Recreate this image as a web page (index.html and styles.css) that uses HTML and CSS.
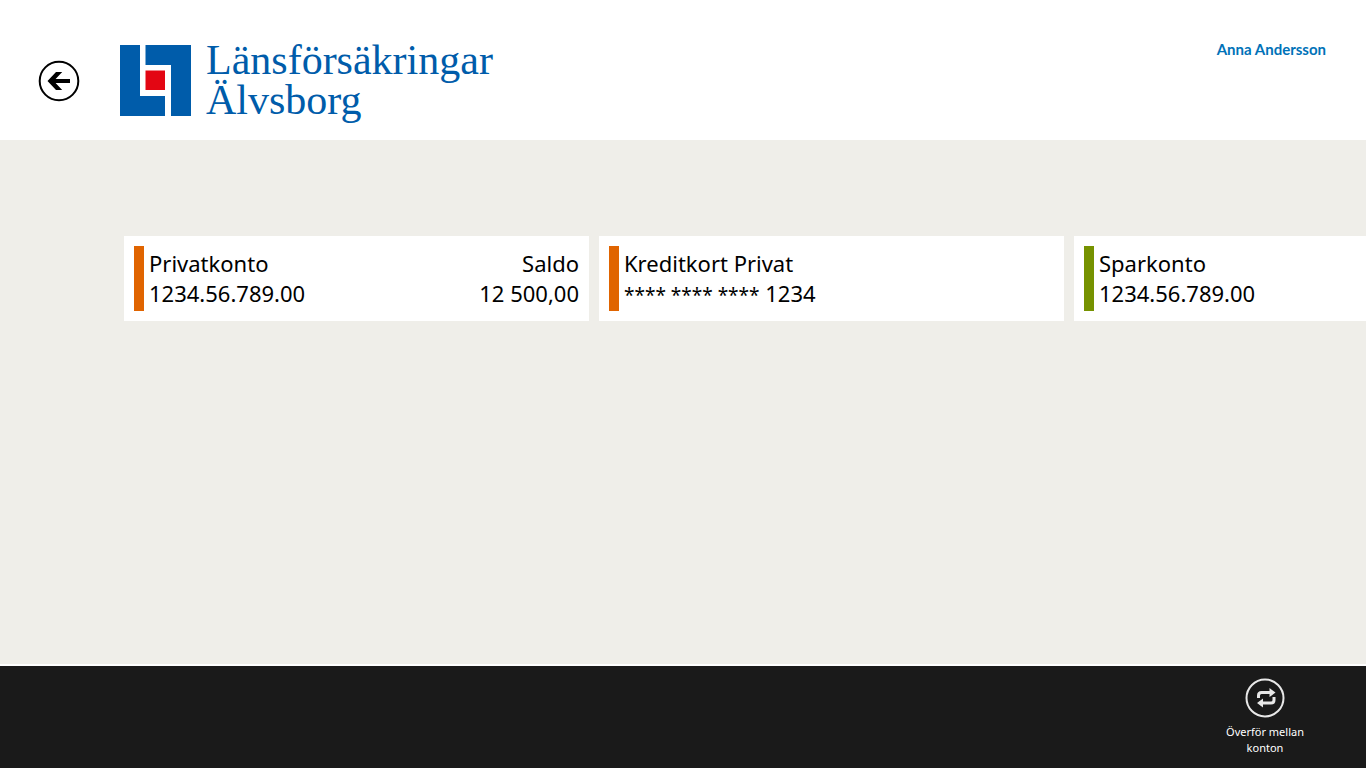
FILE: index.html
```
<!DOCTYPE html>
<html lang="sv">
  <head>
    <meta charset="UTF-8" />
    <meta name="viewport" content="width=device-width, initial-scale=1.0" />
    <title>Länsförsäkringar Älvsborg - Konton</title>
    <link rel="stylesheet" href="styles.css">
  </head>

  <body>
    <header>
      <button type="button" class="back" aria-label="Tillbaka">
        <svg viewBox="0 0 42 42" width="42" height="42">
          <circle cx="21" cy="21" r="19.3" fill="none" stroke="#000" stroke-width="2" />
          <path d="M9.5 21 18 12h6.2l-6.600 7H32v4H17.600l6.600 7H18z" />
        </svg>
      </button>

      <h1 class="brand">
        <svg class="symbol" viewBox="0 0 71 71" width="71" height="71" aria-hidden="true">
          <path fill="#005caa" d="M0 0h20v51h25v20H0z" />
          <path fill="#005caa" d="M25.500 0H71v71H51V20H25.500z" />
          <path fill="#e30613" d="M25.500 25.500H45V45H25.500z" />
        </svg>
        <span>Länsförsäkringar<br>Älvsborg</span>
      </h1>

      <a href="#" class="user">Anna Andersson</a>
    </header>

    <main>
      <ul class="accounts">
        <li class="account">
          <div class="info">
            <div>Privatkonto</div>
            <div>1234.56.789.00</div>
          </div>
          <div class="balance">
            <div>Saldo</div>
            <div>12 500,00</div>
          </div>
        </li>
        <li class="account">
          <div class="info">
            <div>Kreditkort Privat</div>
            <div><span class="masked">**** **** ****</span> 1234</div>
          </div>
        </li>
        <li class="account savings">
          <div class="info">
            <div>Sparkonto</div>
            <div>1234.56.789.00</div>
          </div>
        </li>
      </ul>
    </main>

    <footer>
      <button type="button" class="command">
        <svg viewBox="0 0 40 40" width="40" height="40" aria-hidden="true">
          <circle cx="20" cy="20" r="18.500" fill="none" stroke="#e8e8e8" stroke-width="2" />
          <g fill="none" stroke="#e8e8e8" stroke-width="3">
            <path d="M13.500 20v-2.500q0-3 3-3H25" />
            <path d="M29 19v3q0 3-3 3h-8.500" />
          </g>
          <path fill="#e8e8e8" d="M24.500 10l6 4.500-6 4.500zM18 20.500L12 25l6 4.500z" />
        </svg>
        <span>Överför mellan konton</span>
      </button>
    </footer>
  </body>
</html>
```
FILE: styles.css
```
* {
  box-sizing: border-box;
}

body {
  display: flex;
  flex-direction: column;
  min-height: 100vh;
  margin: 0;
  font-family: "Noto Sans", "Open Sans", sans-serif;
  color: #000;
  background-color: #efeee9;
}

button {
  padding: 0;
  border: none;
  background: none;
  font-family: inherit;
  cursor: pointer;
}

svg {
  display: block;
}

header {
  display: flex;
  align-items: flex-start;
  height: 140px;
  padding: 40px 40px 0 38px;
  background-color: #fff;
}

.back {
  margin: 20px 40px 0 0;
}

.brand {
  display: flex;
  gap: 15px;
  margin: 0;
  font-family: "Liberation Serif", serif;
  font-size: 42px;
  font-weight: normal;
  line-height: 40px;
  color: #005caa;
}

.symbol {
  margin-top: 5px;
}

.user {
  margin-left: auto;
  font-family: Lato, sans-serif;
  font-size: 15px;
  font-weight: bold;
  line-height: 18px;
  color: #0072b8;
  text-decoration: none;
}

main {
  flex: 1;
  padding: 96px 0 0 124px;
}

.accounts {
  display: flex;
  gap: 10px;
  margin: 0;
  padding: 0;
  list-style: none;
  overflow-x: auto;
  scrollbar-width: none;
}

.account {
  display: flex;
  flex: 0 0 465px;
  justify-content: space-between;
  padding: 10px;
  font-size: 22px;
  line-height: 30px;
  background-color: #fff;
}

.info {
  padding: 2px 0 3px 5px;
  border-left: 10px solid #e06400;
}

.savings .info {
  border-left-color: #769200;
}

.balance {
  padding: 2px 0 3px;
  text-align: right;
}

.masked {
  font-size: 19px;
  line-height: 1;
}

footer {
  display: flex;
  justify-content: flex-end;
  height: 104px;
  padding: 12px 51px 0;
  border-top: 2px solid #fff;
  background-color: #1a1a1a;
}

.command {
  display: flex;
  flex-direction: column;
  align-items: center;
  gap: 6px;
  width: 100px;
  height: 80px;
  font-size: 11px;
  line-height: 16px;
  color: #fff;
}

.command span {
  width: 90px;
}
```
